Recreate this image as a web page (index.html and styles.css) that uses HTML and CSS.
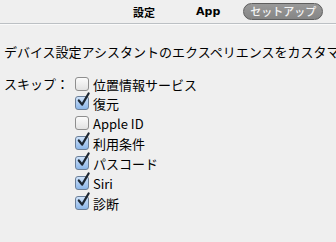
FILE: index.html
```html
<!DOCTYPE html>
<html lang="ja">
<head>
    <meta charset="UTF-8">
    <title>セットアップ</title>
    <link rel="stylesheet" href="styles.css">
</head>
<body>
    <div class="toolbar">
        <span class="tab">設定</span>
        <span class="tab tab-app">App</span>
        <span class="tab tab-active">セットアップ</span>
    </div>

    <p class="intro">デバイス設定アシスタントのエクスペリエンスをカスタマイズします。</p>

    <div class="skip">
        <div class="skip-label">スキップ：</div>
        <ul class="options">
            <li><span class="box"></span>位置情報サービス</li>
            <li><span class="box checked"><svg viewBox="0 0 14 16"><path d="M2 8.5 L5.5 13 L12.5 1" fill="none" stroke="#1d2733" stroke-width="2.4" stroke-linecap="round" stroke-linejoin="round"/></svg></span>復元</li>
            <li><span class="box"></span>Apple ID</li>
            <li><span class="box checked"><svg viewBox="0 0 14 16"><path d="M2 8.5 L5.5 13 L12.5 1" fill="none" stroke="#1d2733" stroke-width="2.4" stroke-linecap="round" stroke-linejoin="round"/></svg></span>利用条件</li>
            <li><span class="box checked"><svg viewBox="0 0 14 16"><path d="M2 8.5 L5.5 13 L12.5 1" fill="none" stroke="#1d2733" stroke-width="2.4" stroke-linecap="round" stroke-linejoin="round"/></svg></span>パスコード</li>
            <li><span class="box checked"><svg viewBox="0 0 14 16"><path d="M2 8.5 L5.5 13 L12.5 1" fill="none" stroke="#1d2733" stroke-width="2.4" stroke-linecap="round" stroke-linejoin="round"/></svg></span>Siri</li>
            <li><span class="box checked"><svg viewBox="0 0 14 16"><path d="M2 8.5 L5.5 13 L12.5 1" fill="none" stroke="#1d2733" stroke-width="2.4" stroke-linecap="round" stroke-linejoin="round"/></svg></span>診断</li>
        </ul>
    </div>
</body>
</html>
```

FILE: styles.css
```css
* {
    margin: 0;
    padding: 0;
    box-sizing: border-box;
}

body {
    background: #efefef;
    font-family: 'DejaVu Sans', 'Noto Sans CJK JP', sans-serif;
    font-size: 13px;
    color: #000;
    overflow: hidden;
    width: 336px;
    height: 242px;
}

.toolbar {
    height: 24px;
    display: flex;
    align-items: center;
    padding-left: 133px;
    border-bottom: 1px solid #bcc0c4;
    box-shadow: 0 1px 0 #fafafa;
}

.tab {
    font-family: 'Noto Sans CJK JP', sans-serif;
    font-weight: 700;
    font-size: 11px;
    line-height: 16px;
}

.tab-app {
    margin-left: 41px;
    font-family: 'DejaVu Sans', sans-serif;
    font-size: 11px;
}

.tab-active {
    margin-left: 23px;
    width: 80px;
    height: 17px;
    border-radius: 9px;
    background: linear-gradient(#9a9a9a, #858585);
    border: 1px solid #5e5e5e;
    color: #f4f4f4;
    font-weight: 500;
    text-align: center;
    line-height: 15px;
    margin-top: -1px;
}

.intro {
    font-family: 'Noto Sans CJK JP', sans-serif;
    margin-top: 19px;
    padding-left: 4px;
    line-height: 17px;
    white-space: nowrap;
}

.skip {
    display: flex;
    margin-top: 14px;
    font-family: 'Noto Sans CJK JP', sans-serif;
}

.skip-label {
    width: 75px;
    padding-left: 4px;
    line-height: 20px;
}

.options {
    list-style: none;
}

.options li {
    display: flex;
    align-items: center;
    height: 20px;
    gap: 4px;
}

.options li:nth-child(2) {
    margin-top: -1px;
}

.box {
    position: relative;
    width: 14px;
    height: 14px;
    border: 1px solid #8e8e8e;
    border-radius: 3px;
    background: linear-gradient(#fbfbfb, #e2e2e2);
}

.box.checked {
    border-color: #6b7f98;
    background: linear-gradient(#cfe3fb, #8cb6e8);
}

.box svg {
    position: absolute;
    left: 1px;
    top: -5px;
    width: 13px;
    height: 16px;
}
```
